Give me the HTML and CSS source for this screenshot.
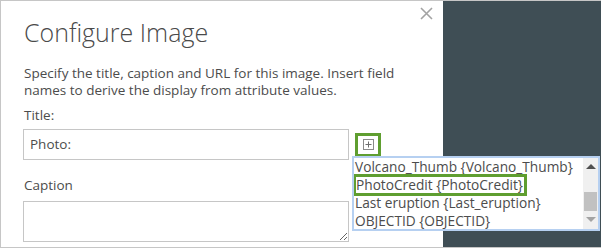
FILE: index.html
```html
<!DOCTYPE html>
<html>
<head>
<meta charset="utf-8">
<link rel="stylesheet" href="styles.css">
</head>
<body>
<div class="frame">
  <section class="dialog">
    <button class="close" aria-label="Close">
      <svg width="13" height="13" viewBox="0 0 13 13"><path d="M1 1L12 12M12 1L1 12" stroke="#a3a3a3" stroke-width="1.6" fill="none"/></svg>
    </button>
    <h1 class="title">Configure Image</h1>
    <p class="desc">Specify the title, caption and URL for this image. Insert field names to derive the display from attribute values.</p>
    <div class="label">Title:</div>
    <div class="field-row">
      <div class="input">Photo:</div>
      <div class="insert">
        <span class="plus-btn">
          <svg width="11" height="11" viewBox="0 0 11 11"><rect x="0.5" y="0.5" width="10" height="10" fill="none" stroke="#8a8a8a"/><path d="M5.5 2.5V8.5M2.5 5.5H8.5" stroke="#6e6e6e" fill="none"/></svg>
        </span>
        <div class="list">
          <ul class="items">
            <li class="item">Volcano_Thumb {Volcano_Thumb}</li>
            <li class="item"><span class="hl">PhotoCredit {PhotoCredit}</span></li>
            <li class="item">Last eruption {Last_eruption}</li>
            <li class="item">OBJECTID {OBJECTID}</li>
          </ul>
          <div class="scrollbar">
            <span class="arrow up"></span>
            <span class="track"><span class="thumb"></span></span>
            <span class="arrow down"></span>
          </div>
        </div>
      </div>
    </div>
    <div class="label caption">Caption</div>
    <textarea class="textarea"></textarea>
  </section>
  <aside class="panel"></aside>
</div>
</body>
</html>
```
FILE: styles.css
```css
* { box-sizing: border-box; }
html, body { margin: 0; padding: 0; background: #fff; }
body { font-family: "Open Sans", Lato, sans-serif; color: #4c4c4c; }

.frame {
  display: flex;
  width: 601px;
  height: 248px;
  border: 1px solid #c6c6c6;
  border-right: none;
}

.dialog {
  position: relative;
  width: 442px;
  padding: 15px 0 0 22px;
  background: #fff;
}

.close {
  position: absolute;
  top: 6px;
  right: 10px;
  border: 0;
  background: none;
  padding: 0;
  width: 13px;
  height: 13px;
  display: block;
}
.close svg { display: block; }

.title {
  margin: 0;
  font-size: 25px;
  font-weight: 300;
  line-height: 32px;
  color: #4a4a4a;
  padding-left: 1px;
}

.desc {
  margin: 17px 0 0;
  font-size: 13.5px;
  line-height: 17px;
  width: 410px;
  padding-left: 1px;
}

.label {
  margin-top: 8px;
  font-size: 13.5px;
  line-height: 17px;
  padding-left: 1px;
}

.field-row {
  display: flex;
  align-items: center;
  margin-top: 5px;
}

.input {
  width: 326px;
  height: 31px;
  border: 1px solid #c6c6c6;
  font-size: 13.5px;
  line-height: 29px;
  padding-left: 6px;
}

.insert {
  position: relative;
  margin-left: 6px;
}

.plus-btn {
  display: flex;
  align-items: center;
  justify-content: center;
  width: 26px;
  height: 24px;
  border: 3px solid #5f9e30;
  background: #fff;
}
.plus-btn svg { display: block; }

.list {
  position: absolute;
  left: -3px;
  top: 23px;
  width: 248px;
  height: 75px;
  border: 2px solid #b6d0f1;
  background: #fff;
  display: flex;
  z-index: 2;
  overflow: hidden;
}

.items {
  list-style: none;
  margin: 0;
  padding: 0;
  flex: 1;
}

.item {
  font-size: 13.7px;
  line-height: 18px;
  height: 18px;
  padding-left: 1px;
  white-space: nowrap;
}

.hl {
  display: inline-block;
  border: 3px solid #5f9e30;
  line-height: 16px;
  margin: -2px 0 -2px -2px;
  padding: 0 1px 0 0;
  vertical-align: top;
}

.scrollbar {
  width: 15px;
  background: #f0f0f0;
  display: flex;
  flex-direction: column;
  align-items: center;
}
.arrow { width: 0; height: 0; border-left: 5px solid transparent; border-right: 5px solid transparent; }
.arrow.up { border-bottom: 5px solid #505050; margin-top: 6px; }
.arrow.down { border-top: 5px solid #a3a3a3; margin-top: 6px; margin-bottom: 7px; }
.track { flex: 1; width: 100%; display: flex; flex-direction: column; justify-content: flex-end; margin-top: 20px; }
.thumb { display: block; width: 13px; height: 19px; background: #c1c1c1; margin-left: 1px; }

.caption { margin-top: 17px; }

.textarea {
  display: block;
  margin-top: 7px;
  width: 326px;
  height: 41px;
  border: 1px solid #c6c6c6;
  resize: both;
  font-family: inherit;
  padding: 0;
  outline: none;
}

.panel {
  flex: 1;
  background: #3f4e55;
}
```
